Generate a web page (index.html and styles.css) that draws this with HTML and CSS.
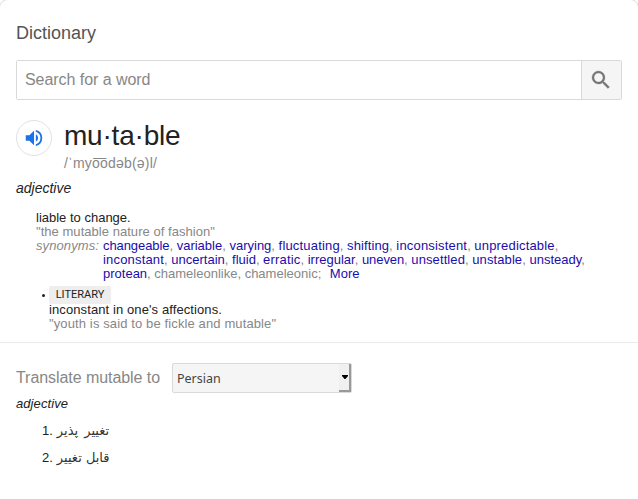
FILE: index.html
```html
<!DOCTYPE html>
<html lang="en">
<head>
<meta charset="utf-8">
<title>Dictionary</title>
<link rel="stylesheet" href="styles.css">
</head>
<body>
<main class="card">
  <section class="dictionary">
    <h1 class="title">Dictionary</h1>
    <form class="search">
      <input class="search-input" type="text" placeholder="Search for a word">
      <button class="search-button" type="button" aria-label="Search">
        <svg width="24" height="24" viewBox="0 0 24 24"><path fill="#757575" stroke="#757575" stroke-width=".3" d="M15.5 14h-.79l-.28-.27A6.47 6.47 0 0 0 16 9.5 6.5 6.5 0 1 0 9.5 16c1.61 0 3.09-.59 4.23-1.57l.27.28v.79l5 4.99L20.49 19l-4.99-5zm-6 0C7.01 14 5 11.99 5 9.5S7.01 5 9.5 5 14 7.01 14 9.5 11.99 14 9.5 14z"/></svg>
      </button>
    </form>
    <header class="word">
      <button class="speak" type="button" aria-label="Listen">
        <svg width="22" height="22" viewBox="0 0 24 24"><path fill="#1a73e8" d="M3 9v6h4l5 5V4L7 9H3zm13.5 3A4.5 4.5 0 0 0 14 7.97v8.05A4.47 4.47 0 0 0 16.5 12zM14 3.23v2.06a7 7 0 0 1 0 13.42v2.06a9 9 0 0 0 0-17.54z"/></svg>
      </button>
      <div>
        <div class="headword">mu·ta·ble</div>
        <div class="phonetic">/ˈmyo͞odəb(ə)l/</div>
      </div>
    </header>
    <div class="part">adjective</div>
    <div class="sense">
      <div>liable to change.</div>
      <div class="muted example">"the mutable nature of fashion"</div>
      <div class="synonyms muted">
        <i class="label">synonyms:</i>
        <div><a class="tight">changeable</a>, <a>variable</a>, <a>varying</a>, <a class="looser">fluctuating</a>, <a class="loose">shifting</a>, <a class="looser">inconsistent</a>, <a class="looser">unpredictable</a>,<br><a class="looser">inconstant</a>, <a>uncertain</a>, <a>fluid</a>, <a class="looser">erratic</a>, <a>irregular</a>, <a class="tight">uneven</a>, <a class="loose">unsettled</a>, <a class="loose">unstable</a>, <a>unsteady</a>,<br><a>protean</a>, chameleonlike, chameleonic; <a class="more">More</a></div>
      </div>
      <div class="subsense">
        <span class="bullet"></span>
        <div>
          <span class="tag">LITERARY</span>
          <div class="meaning">inconstant in one's affections.</div>
          <div class="muted usage">"youth is said to be fickle and mutable"</div>
        </div>
      </div>
    </div>
  </section>
  <section class="translate">
    <div class="translate-row">
      <span class="translate-label">Translate mutable to</span>
      <div class="select" role="combobox" tabindex="0">
        <span class="select-value">Persian</span>
        <span class="select-arrow"><svg width="6" height="4" viewBox="0 0 6 4"><path d="M0 0h6v1L3.5 4h-1L0 1z"/></svg></span>
      </div>
    </div>
    <div class="translate-part">adjective</div>
    <div class="translations">
      <div class="item"><span>1.</span><span class="fa first" lang="fa" dir="rtl">تغییر پذیر</span></div>
      <div class="item"><span>2.</span><span class="fa" lang="fa" dir="rtl">قابل تغییر</span></div>
    </div>
  </section>
</main>
</body>
</html>
```
FILE: styles.css
```css
* { box-sizing: border-box; }
body {
  margin: 0;
  background: #fff;
  color: #222;
  font: 13px/14px "Liberation Sans", Arial, sans-serif;
}
.card {
  height: 499px;
  overflow: hidden;
  border-top-left-radius: 8px;
  border-top-right-radius: 8px;
  box-shadow: 0 0 0 1px #dfe1e5;
}
.dictionary {
  height: 343px;
  padding: 21px 16px 0;
  border-bottom: 1px solid #ebebeb;
}
.title {
  margin: 0 0 15px;
  color: #545454;
  font-size: 18px;
  font-weight: 400;
  line-height: 24px;
}
.search {
  display: flex;
  height: 40px;
  border: 1px solid #d9d9d9;
  border-radius: 2px;
}
.search-input {
  flex: 1;
  min-width: 0;
  padding: 0 8px;
  border: 0;
  outline: 0;
  background: #fff;
  font: 16px "Liberation Sans", Arial, sans-serif;
  letter-spacing: -0.05px;
}
.search-input::placeholder { color: #878787; }
.search-button {
  display: flex;
  width: 40px;
  padding: 0 1px 1px 0;
  align-items: center;
  justify-content: center;
  border: 0;
  border-left: 1px solid #d9d9d9;
  background: #f5f5f5;
}
.word {
  display: flex;
  height: 72px;
  padding-top: 20px;
  gap: 12px;
}
.speak {
  display: flex;
  width: 36px;
  height: 36px;
  padding: 0;
  align-items: center;
  justify-content: center;
  border: 1px solid #dfe1e5;
  border-radius: 50%;
  background: #fff;
}
.headword {
  font-size: 28px;
  letter-spacing: -0.2px;
  line-height: 32px;
}
.phonetic {
  height: 20px;
  color: #878787;
  font-size: 14px;
  letter-spacing: 0.2px;
  line-height: 22px;
}
.part {
  padding-top: 8px;
  font-size: 14px;
  font-style: italic;
  line-height: 16px;
}
.sense { padding: 15px 0 0 20px; }
.muted { color: #878787; }
.example { letter-spacing: 0.04px; }
.synonyms {
  display: flex;
  white-space: nowrap;
}
.label {
  width: 67px;
  letter-spacing: 0.1px;
}
a { color: #1a0dab; }
.loose { letter-spacing: 0.1px; }
.looser { letter-spacing: 0.18px; }
.tight { letter-spacing: -0.08px; }
.more { margin-left: 5px; }
.subsense {
  display: flex;
  padding: 5px 0 0 6px;
}
.bullet {
  width: 3px;
  height: 3px;
  margin: 8px 4px 0 0;
  border-radius: 50%;
  background: #222;
}
.tag {
  display: block;
  width: 62px;
  height: 18px;
  margin-bottom: -1px;
  border-radius: 2px;
  background: #eee;
  font: 11px/17px Roboto, sans-serif;
  text-align: center;
}
.meaning { letter-spacing: 0.1px; }
.usage { letter-spacing: 0.12px; }
.translate { padding: 20px 16px 0; }
.translate-row {
  display: flex;
  height: 30px;
  align-items: center;
  gap: 12px;
}
.translate-label {
  width: 144px;
  color: #878787;
  font-size: 16px;
  letter-spacing: -0.06px;
  line-height: 30px;
  white-space: nowrap;
}
.select {
  display: flex;
  width: 180px;
  height: 30px;
  justify-content: space-between;
  border: 1px solid #d9d9d9;
  border-radius: 2px;
  background: #f5f5f5;
  color: #444;
}
.select-value {
  padding-left: 4px;
  font: 12.5px/29px "Noto Sans", sans-serif;
}
.select-arrow {
  display: flex;
  width: 12px;
  height: 28px;
  padding-left: 2px;
  align-items: center;
  justify-content: center;
  border-right: 2px solid #999;
  border-bottom: 2px solid #999;
  background: #f0f0f0;
}
.translate-part {
  margin-top: 3px;
  font-style: italic;
  letter-spacing: 0.08px;
  line-height: 16px;
}
.translations { padding: 5px 0 0 26px; }
.item {
  display: flex;
  height: 27px;
  align-items: center;
  gap: 4px;
}
.fa {
  color: #333;
  font-family: "DejaVu Sans", sans-serif;
}
.first { word-spacing: 2px; }
```
